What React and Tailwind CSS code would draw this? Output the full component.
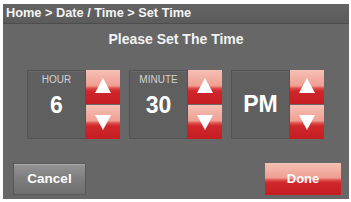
import React from 'react';

const font = { fontFamily: '"Liberation Sans", Arial, sans-serif' };

const redFace =
  'bg-[linear-gradient(to_bottom,#f6c0b5_0%,#ef9f92_46%,#dd4a48_54%,#cf262a_62%,#c61d23_100%)]';

const Arrow = ({ dir }) => (
  <svg width="16" height="15" viewBox="0 0 16 15">
    <polygon points={dir === 'up' ? '8,0 16,15 0,15' : '0,0 16,0 8,15'} fill="#ffffff" />
  </svg>
);

const Spinner = () => (
  <div className="flex flex-col gap-px w-[34px] h-[69px]">
    <button className={`h-[34px] flex items-center justify-center ${redFace} pb-[4px]`}>
      <Arrow dir="up" />
    </button>
    <button className={`h-[34px] flex items-center justify-center ${redFace}`}>
      <Arrow dir="down" />
    </button>
  </div>
);

const Field = ({ label, value }) => (
  <div className="flex">
    <div className="w-[59px] h-[69px] bg-[#5f5f5f] border border-[#535353] shadow-[inset_0_1px_0_rgba(255,255,255,0.07)] flex flex-col items-center">
      {label ? (
        <>
          <div className="pt-[3px] text-[10px] leading-[12px] text-[#d2d2d2]">{label}</div>
          <div className="mt-[8px] text-[23px] leading-none font-bold text-white">{value}</div>
        </>
      ) : (
        <div className="h-full flex items-center text-[23px] leading-none font-bold text-white">{value}</div>
      )}
    </div>
    <Spinner />
  </div>
);

export default function App() {
  return (
    <div className="w-[351px] h-[202px] bg-white pt-[4px] pl-[3px] pr-[2px] pb-[3px]" style={font}>
      <div className="h-full bg-[#676767] flex flex-col">
        {/* breadcrumb */}
        <div className="h-[20px] shrink-0 bg-[linear-gradient(to_bottom,#646464,#5b5b5b)] border-b border-[#4d4d4d] flex items-center pl-[3px]">
          <span className="text-[12.75px] font-bold text-[#f4f4f4] leading-none">
            Home &gt; Date / Time &gt; Set Time
          </span>
        </div>

        <div className="h-[29px] shrink-0 flex items-center justify-center">
          <span className="text-[14px] font-bold text-[#f2f2f2] leading-none">Please Set The Time</span>
        </div>

        {/* time pickers */}
        <div className="mt-[17px] pl-[24px] flex gap-[9px]">
          <Field label="HOUR" value="6" />
          <Field label="MINUTE" value="30" />
          <Field value="PM" />
        </div>

        <div className="mt-[24px] pl-[10px] pr-[8px] flex justify-between">
          <button className="w-[73px] h-[32px] border border-[#585858] bg-[linear-gradient(to_bottom,#959595,#7d7d7d_50%,#6f6f6f)] shadow-[inset_0_1px_0_rgba(255,255,255,0.2)] text-[13.5px] font-bold text-white">
            Cancel
          </button>
          <button className={`w-[76px] h-[32px] ${redFace} text-[13px] font-bold text-white`}>
            Done
          </button>
        </div>
      </div>
    </div>
  );
}
